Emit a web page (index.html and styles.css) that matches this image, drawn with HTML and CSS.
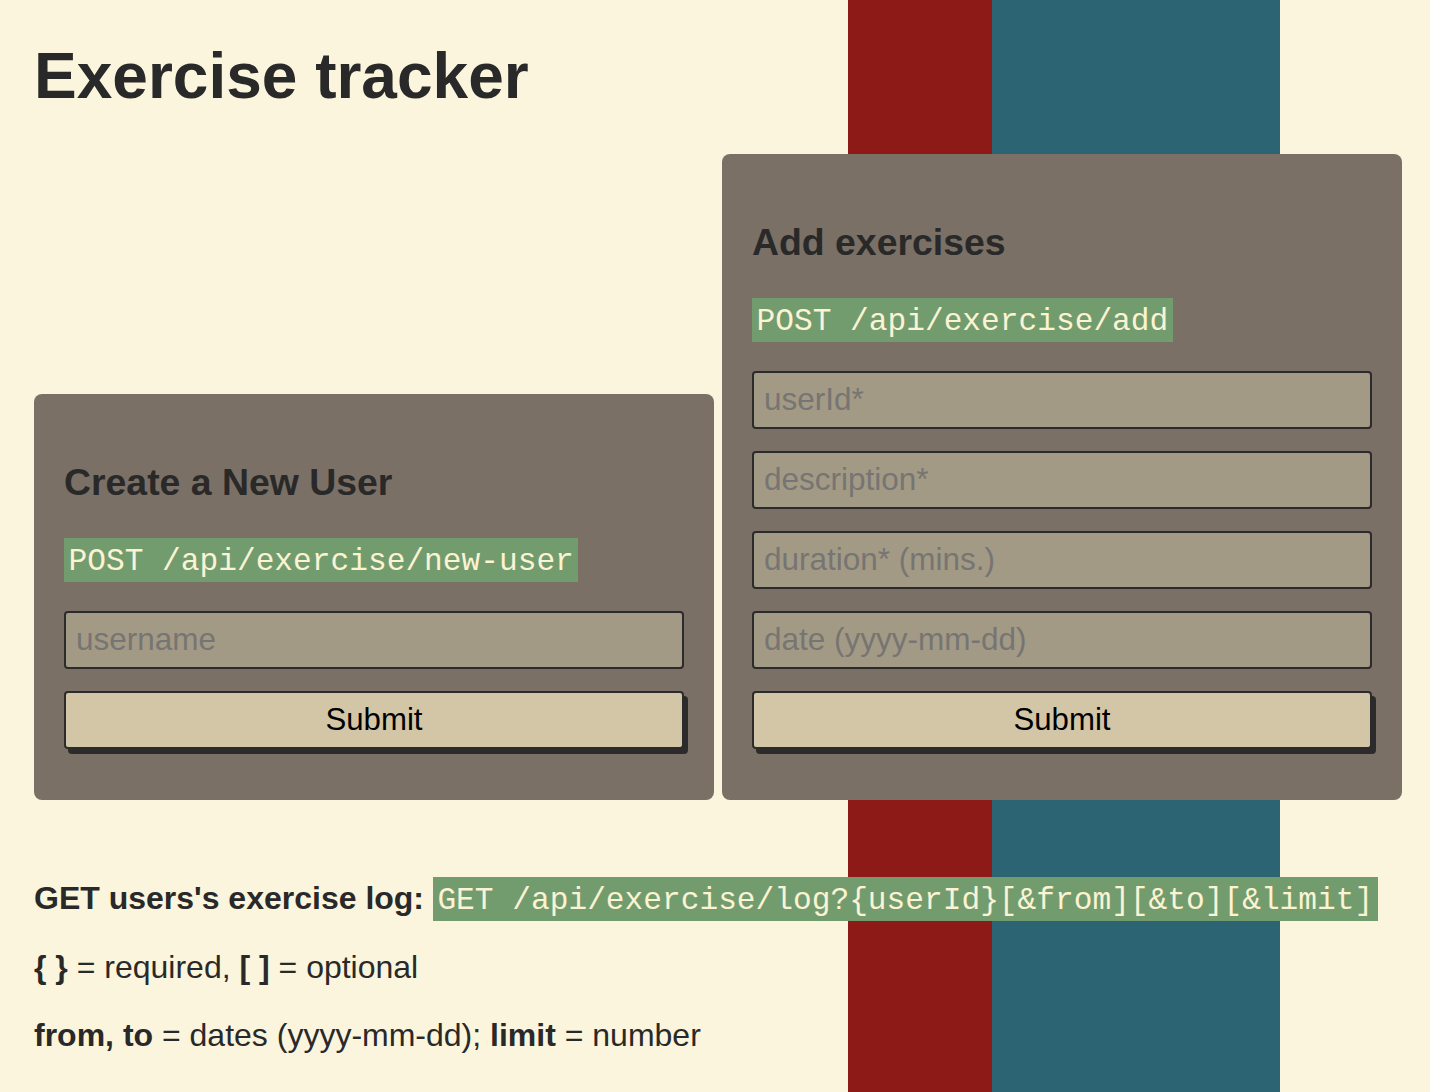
FILE: index.html
```html
<!DOCTYPE html>
<html lang="en">
<head>
<meta charset="utf-8">
<title>Exercise tracker</title>
<link rel="stylesheet" href="styles.css">
</head>
<body>
<h1 class="title">Exercise tracker</h1>
<div class="cards">
  <section class="card">
    <h3 class="card-title">Create a New User</h3>
    <div class="endpoint"><code class="code">POST /api/exercise/new-user</code></div>
    <form class="form">
      <input class="field" type="text" placeholder="username">
      <button class="submit" type="button">Submit</button>
    </form>
  </section>
  <section class="card">
    <h3 class="card-title">Add exercises</h3>
    <div class="endpoint"><code class="code">POST /api/exercise/add</code></div>
    <form class="form">
      <input class="field" type="text" placeholder="userId*">
      <input class="field" type="text" placeholder="description*">
      <input class="field" type="text" placeholder="duration* (mins.)">
      <input class="field" type="text" placeholder="date (yyyy-mm-dd)">
      <button class="submit" type="button">Submit</button>
    </form>
  </section>
</div>
<div class="info">
  <p class="line"><b>GET users's exercise log:</b> <code class="code code-inline">GET /api/exercise/log?{userId}[&amp;from][&amp;to][&amp;limit]</code></p>
  <p class="line"><b>{ }</b> = required, <b>[ ]</b> = optional</p>
  <p class="line"><b>from, to</b> = dates (yyyy-mm-dd); <b>limit</b> = number</p>
</div>
</body>
</html>
```
FILE: styles.css
```css
html {
  background: linear-gradient(to right,
    #faf5dc 0, #faf5dc 848px,
    #8e1a17 848px, #8e1a17 992px,
    #2c6474 992px, #2c6474 1280px,
    #faf5dc 1280px, #faf5dc 100%);
  min-height: 100%;
}

body {
  margin: 0;
  padding: 0 28px 0 34px;
  min-height: 100vh;
  font-family: "Liberation Sans", Arial, sans-serif;
  font-size: 32px;
  color: #292929;
}

.title {
  margin: 39px 0 41px;
  font-size: 64px;
  line-height: 74px;
  font-weight: bold;
  color: #292929;
}

.cards {
  display: flex;
  align-items: flex-end;
  gap: 8px;
}

.card {
  width: 680px;
  box-sizing: border-box;
  background: #7a7066;
  border-radius: 8px;
  padding: 30px 30px 51px;
}

.card-title {
  margin: 37.4px 0 0;
  font-size: 37.4px;
  line-height: 43px;
  font-weight: bold;
  color: #292929;
}

.endpoint {
  display: flex;
  align-items: flex-start;
  margin-top: 34px;
}

.code {
  font-family: "Liberation Mono", "Courier New", monospace;
  font-size: 31.2px;
  background: #739c6e;
  color: #faf3d4;
  padding: 6px 4.5px 2px;
}

.endpoint .code {
  line-height: 35.4px;
}

.code-inline {
  line-height: 1;
  padding-bottom: 3px;
}

.form {
  display: flex;
  flex-direction: column;
  gap: 22px;
  margin: 29px 0 0;
}

.field {
  box-sizing: border-box;
  width: 100%;
  height: 58px;
  margin: 0;
  padding: 0 10px;
  border: 2px solid #2b2b2b;
  border-radius: 4px;
  background: #a39a85;
  font-family: "Liberation Sans", Arial, sans-serif;
  font-size: 31.5px;
  color: #292929;
  outline: none;
}

.field::placeholder {
  color: #767573;
  opacity: 1;
}

.submit {
  box-sizing: border-box;
  width: 100%;
  height: 58px;
  margin: 0;
  padding: 0;
  border: 2px solid #2b2b2b;
  border-radius: 4px;
  background: #d3c6a6;
  box-shadow: 4px 5px 0 #2b2b2b;
  font-family: "Liberation Sans", Arial, sans-serif;
  font-size: 31.2px;
  color: #000;
  cursor: pointer;
}

.info {
  margin-top: 80.5px;
  display: flex;
  flex-direction: column;
  gap: 31.5px;
}

.line {
  margin: 0;
  line-height: 37px;
  color: #292929;
}
```
